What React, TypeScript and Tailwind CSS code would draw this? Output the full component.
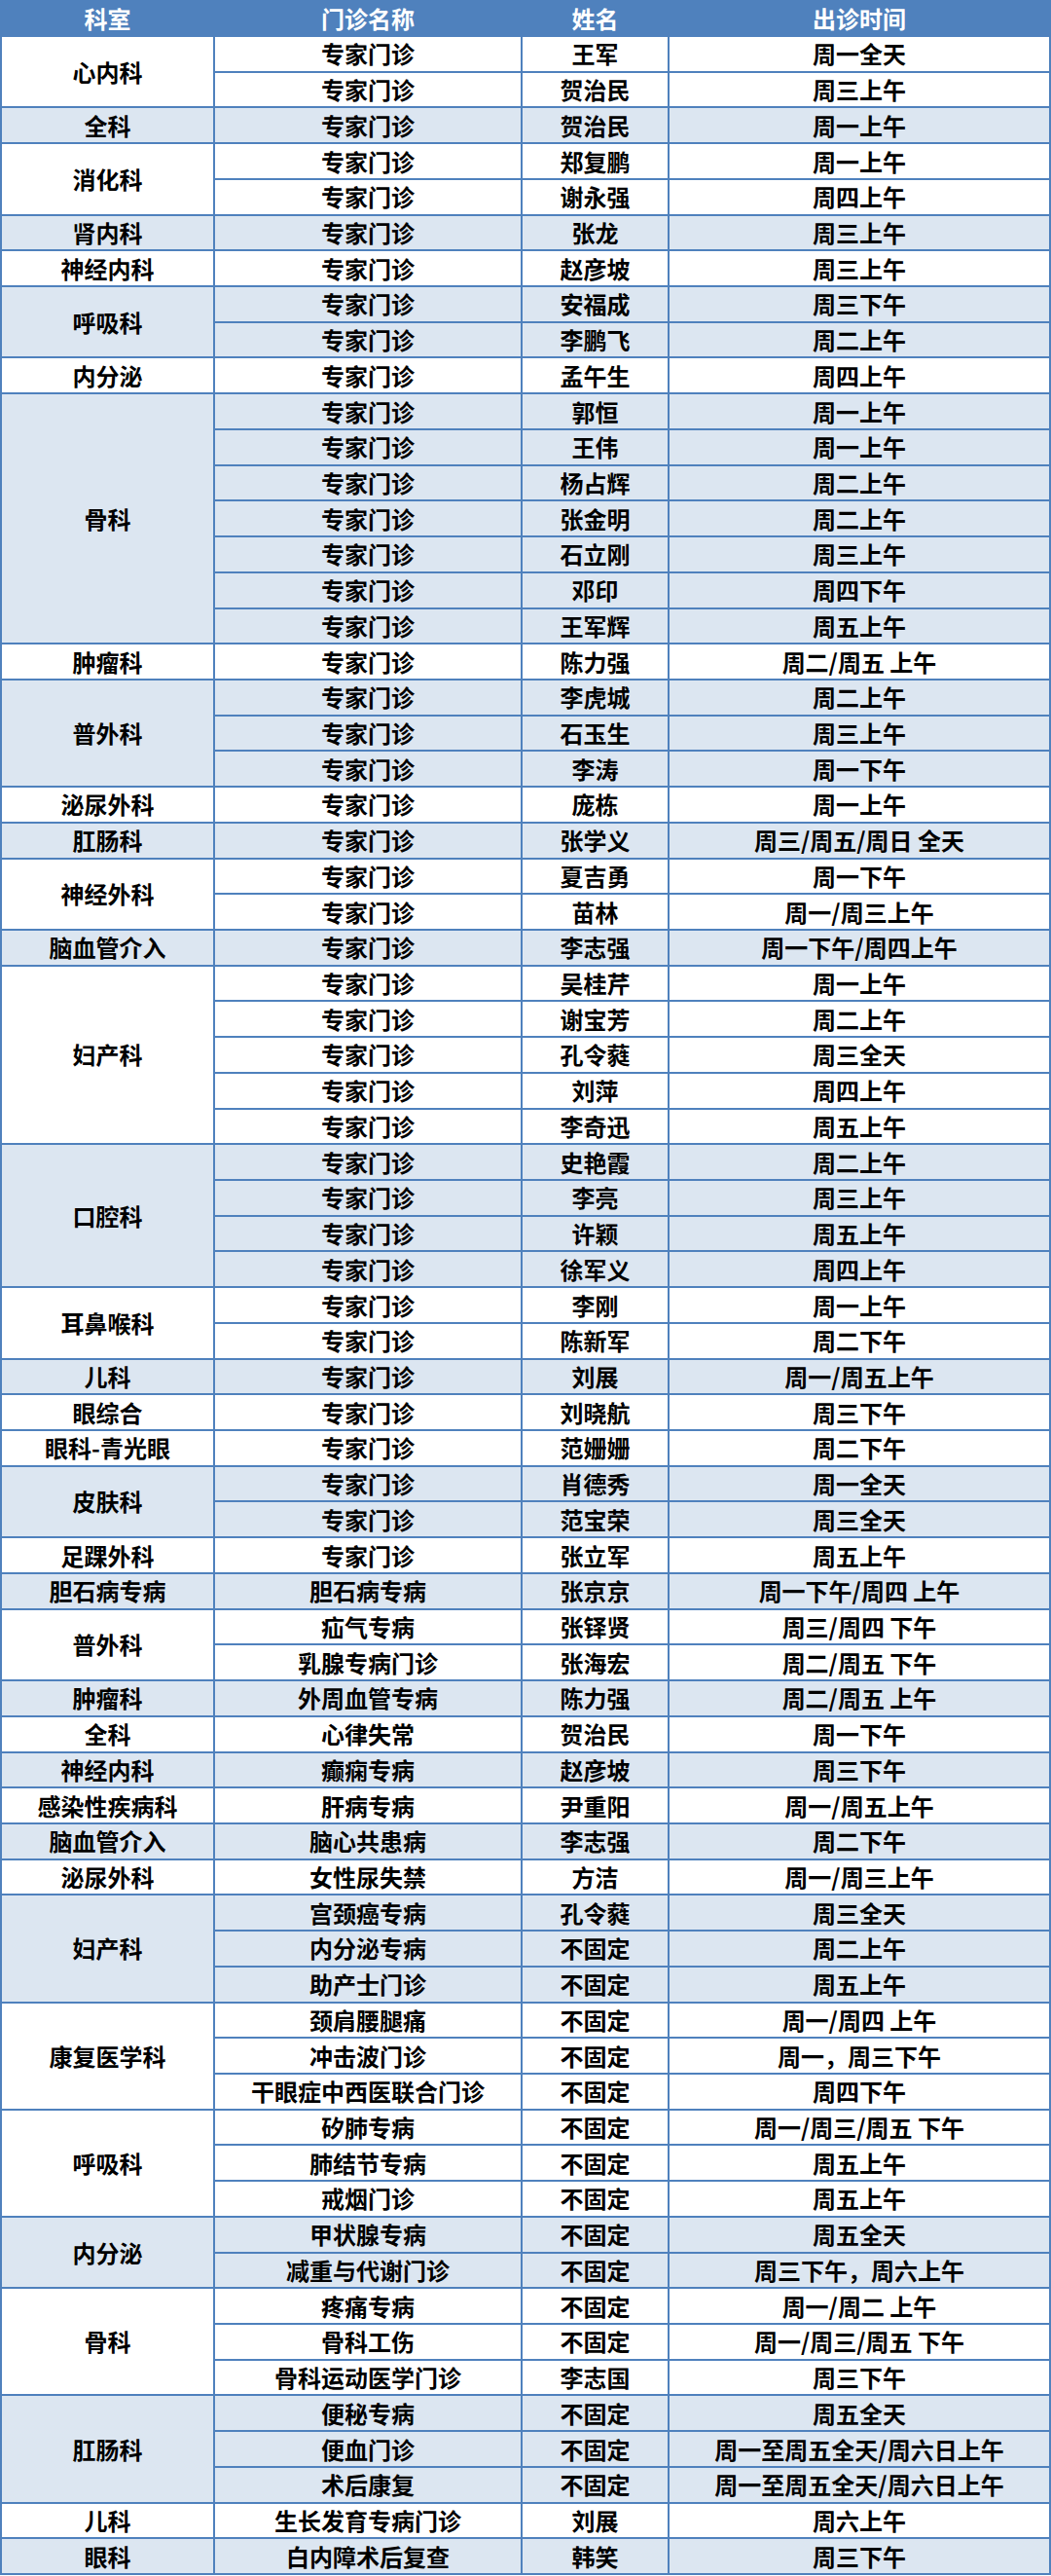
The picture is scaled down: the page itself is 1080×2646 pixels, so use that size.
type Row = [string, string, string];
type Group = { dept: string; blue: boolean; rows: Row[] };

const Z = "专家门诊";

const groups: Group[] = [
  { dept: "心内科", blue: false, rows: [[Z, "王军", "周一全天"], [Z, "贺治民", "周三上午"]] },
  { dept: "全科", blue: true, rows: [[Z, "贺治民", "周一上午"]] },
  { dept: "消化科", blue: false, rows: [[Z, "郑复鹏", "周一上午"], [Z, "谢永强", "周四上午"]] },
  { dept: "肾内科", blue: true, rows: [[Z, "张龙", "周三上午"]] },
  { dept: "神经内科", blue: false, rows: [[Z, "赵彦坡", "周三上午"]] },
  { dept: "呼吸科", blue: true, rows: [[Z, "安福成", "周三下午"], [Z, "李鹏飞", "周二上午"]] },
  { dept: "内分泌", blue: false, rows: [[Z, "孟午生", "周四上午"]] },
  {
    dept: "骨科",
    blue: true,
    rows: [
      [Z, "郭恒", "周一上午"],
      [Z, "王伟", "周一上午"],
      [Z, "杨占辉", "周二上午"],
      [Z, "张金明", "周二上午"],
      [Z, "石立刚", "周三上午"],
      [Z, "邓印", "周四下午"],
      [Z, "王军辉", "周五上午"],
    ],
  },
  { dept: "肿瘤科", blue: false, rows: [[Z, "陈力强", "周二/周五 上午"]] },
  {
    dept: "普外科",
    blue: true,
    rows: [[Z, "李虎城", "周二上午"], [Z, "石玉生", "周三上午"], [Z, "李涛", "周一下午"]],
  },
  { dept: "泌尿外科", blue: false, rows: [[Z, "庞栋", "周一上午"]] },
  { dept: "肛肠科", blue: true, rows: [[Z, "张学义", "周三/周五/周日 全天"]] },
  { dept: "神经外科", blue: false, rows: [[Z, "夏吉勇", "周一下午"], [Z, "苗林", "周一/周三上午"]] },
  { dept: "脑血管介入", blue: true, rows: [[Z, "李志强", "周一下午/周四上午"]] },
  {
    dept: "妇产科",
    blue: false,
    rows: [
      [Z, "吴桂芹", "周一上午"],
      [Z, "谢宝芳", "周二上午"],
      [Z, "孔令蕤", "周三全天"],
      [Z, "刘萍", "周四上午"],
      [Z, "李奇迅", "周五上午"],
    ],
  },
  {
    dept: "口腔科",
    blue: true,
    rows: [
      [Z, "史艳霞", "周二上午"],
      [Z, "李亮", "周三上午"],
      [Z, "许颖", "周五上午"],
      [Z, "徐军义", "周四上午"],
    ],
  },
  { dept: "耳鼻喉科", blue: false, rows: [[Z, "李刚", "周一上午"], [Z, "陈新军", "周二下午"]] },
  { dept: "儿科", blue: true, rows: [[Z, "刘展", "周一/周五上午"]] },
  { dept: "眼综合", blue: false, rows: [[Z, "刘晓航", "周三下午"]] },
  { dept: "眼科-青光眼", blue: false, rows: [[Z, "范姗姗", "周二下午"]] },
  { dept: "皮肤科", blue: true, rows: [[Z, "肖德秀", "周一全天"], [Z, "范宝荣", "周三全天"]] },
  { dept: "足踝外科", blue: false, rows: [[Z, "张立军", "周五上午"]] },
  { dept: "胆石病专病", blue: true, rows: [["胆石病专病", "张京京", "周一下午/周四 上午"]] },
  {
    dept: "普外科",
    blue: false,
    rows: [["疝气专病", "张铎贤", "周三/周四 下午"], ["乳腺专病门诊", "张海宏", "周二/周五 下午"]],
  },
  { dept: "肿瘤科", blue: true, rows: [["外周血管专病", "陈力强", "周二/周五 上午"]] },
  { dept: "全科", blue: false, rows: [["心律失常", "贺治民", "周一下午"]] },
  { dept: "神经内科", blue: true, rows: [["癫痫专病", "赵彦坡", "周三下午"]] },
  { dept: "感染性疾病科", blue: false, rows: [["肝病专病", "尹重阳", "周一/周五上午"]] },
  { dept: "脑血管介入", blue: true, rows: [["脑心共患病", "李志强", "周二下午"]] },
  { dept: "泌尿外科", blue: false, rows: [["女性尿失禁", "方洁", "周一/周三上午"]] },
  {
    dept: "妇产科",
    blue: true,
    rows: [
      ["宫颈癌专病", "孔令蕤", "周三全天"],
      ["内分泌专病", "不固定", "周二上午"],
      ["助产士门诊", "不固定", "周五上午"],
    ],
  },
  {
    dept: "康复医学科",
    blue: false,
    rows: [
      ["颈肩腰腿痛", "不固定", "周一/周四 上午"],
      ["冲击波门诊", "不固定", "周一，周三下午"],
      ["干眼症中西医联合门诊", "不固定", "周四下午"],
    ],
  },
  {
    dept: "呼吸科",
    blue: false,
    rows: [
      ["矽肺专病", "不固定", "周一/周三/周五 下午"],
      ["肺结节专病", "不固定", "周五上午"],
      ["戒烟门诊", "不固定", "周五上午"],
    ],
  },
  {
    dept: "内分泌",
    blue: true,
    rows: [["甲状腺专病", "不固定", "周五全天"], ["减重与代谢门诊", "不固定", "周三下午，周六上午"]],
  },
  {
    dept: "骨科",
    blue: false,
    rows: [
      ["疼痛专病", "不固定", "周一/周二 上午"],
      ["骨科工伤", "不固定", "周一/周三/周五 下午"],
      ["骨科运动医学门诊", "李志国", "周三下午"],
    ],
  },
  {
    dept: "肛肠科",
    blue: true,
    rows: [
      ["便秘专病", "不固定", "周五全天"],
      ["便血门诊", "不固定", "周一至周五全天/周六日上午"],
      ["术后康复", "不固定", "周一至周五全天/周六日上午"],
    ],
  },
  { dept: "儿科", blue: false, rows: [["生长发育专病门诊", "刘展", "周六上午"]] },
  { dept: "眼科", blue: true, rows: [["白内障术后复查", "韩笑", "周三下午"]] },
];

const base = "flex items-center justify-center whitespace-nowrap leading-none";

export default function App() {
  return (
    <div className="w-[1080px] bg-white font-['Noto_Sans_CJK_SC',sans-serif] font-bold text-[24px] text-black">
      <div className="grid grid-cols-[217px_314px_149px_1fr] auto-rows-[34.73px] grid-rows-[34px] gap-[2px] bg-[#4f81bd] p-[2px]">
        <div className={`${base} text-white`}>科室</div>
        <div className={`${base} text-white`}>门诊名称</div>
        <div className={`${base} text-white`}>姓名</div>
        <div className={`${base} text-white`}>出诊时间</div>
        {groups.map((g, gi) => {
          const bg = g.blue ? "bg-[#dce6f1]" : "bg-white";
          return [
            <div
              key={`d${gi}`}
              className={`${base} ${bg} col-start-1`}
              style={{ gridRow: `span ${g.rows.length}` }}
            >
              {g.dept}
            </div>,
            ...g.rows.flatMap((r, ri) => [
              <div key={`${gi}-${ri}-a`} className={`${base} ${bg} col-start-2`}>
                {r[0]}
              </div>,
              <div key={`${gi}-${ri}-b`} className={`${base} ${bg} col-start-3`}>
                {r[1]}
              </div>,
              <div key={`${gi}-${ri}-c`} className={`${base} ${bg} col-start-4`}>
                {r[2]}
              </div>,
            ]),
          ];
        })}
      </div>
    </div>
  );
}
